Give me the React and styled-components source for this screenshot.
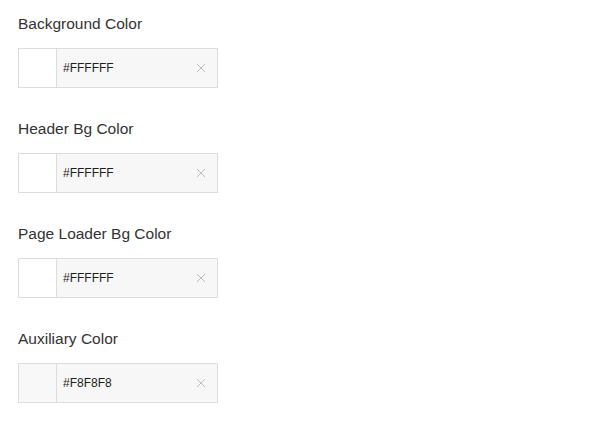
import React from "react";
import styled, { createGlobalStyle } from "styled-components";

const Global = createGlobalStyle`
  html, body { margin: 0; padding: 0; background: #fff; }
  body { font-family: "Liberation Sans", Arial, Helvetica, sans-serif; }
`;

const Page = styled.div`
  padding: 15px 18px;
  display: flex;
  flex-direction: column;
  gap: 32px;
`;

const Section = styled.div`
  display: flex;
  flex-direction: column;
  gap: 15px;
`;

const Label = styled.div`
  font-size: 15.5px;
  line-height: 18px;
  color: #333;
`;

const Field = styled.div`
  display: flex;
  width: 200px;
  height: 40px;
  box-sizing: border-box;
  border: 1px solid #dcdcdc;
  background: #f7f7f7;
`;

const Swatch = styled.div`
  width: 37px;
  flex: none;
  background: ${(p) => p.$color};
  border-right: 1px solid #dcdcdc;
`;

const Value = styled.div`
  flex: 1;
  display: flex;
  align-items: center;
  padding-left: 6px;
  font-size: 12px;
  color: #1e1e1e;
`;

const Clear = styled.span`
  width: 28px;
  display: flex;
  align-items: center;
  justify-content: center;
  padding-right: 2px;
`;

const XIcon = () => (
  <svg width="10" height="10" viewBox="0 0 10 10">
    <path d="M1 1L9 9M9 1L1 9" stroke="#bdbdbd" strokeWidth="1" fill="none" />
  </svg>
);

const items = [
  { label: "Background Color", value: "#FFFFFF" },
  { label: "Header Bg Color", value: "#FFFFFF" },
  { label: "Page Loader Bg Color", value: "#FFFFFF" },
  { label: "Auxiliary Color", value: "#F8F8F8" },
];

export default function App() {
  return (
    <>
      <Global />
      <Page>
        {items.map((it) => (
          <Section key={it.label}>
            <Label>{it.label}</Label>
            <Field>
              <Swatch $color={it.value} />
              <Value>{it.value}</Value>
              <Clear>
                <XIcon />
              </Clear>
            </Field>
          </Section>
        ))}
      </Page>
    </>
  );
}
